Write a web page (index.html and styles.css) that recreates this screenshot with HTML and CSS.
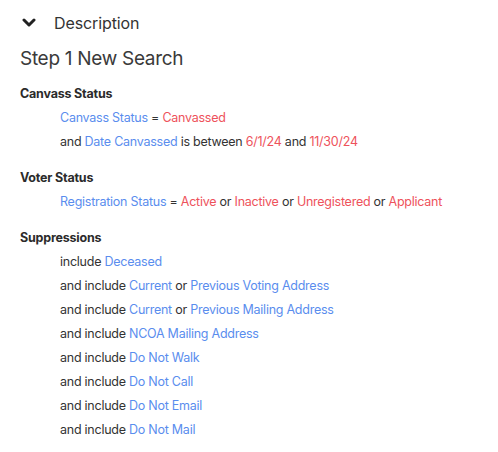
FILE: index.html
```html
<!DOCTYPE html>
<html>
<head>
<meta charset="utf-8">
<link rel="stylesheet" href="styles.css">
</head>
<body>
<div class="panel">
  <div class="toggle">
    <svg class="chev" width="14" height="10" viewBox="0 0 14 10"><path d="M2 2 L7 7 L12 2" fill="none" stroke="#222" stroke-width="3" stroke-linecap="round" stroke-linejoin="round"/></svg>
    <span>Description</span>
  </div>
  <h1 class="title">Step 1 New Search</h1>

  <section class="group">
    <h2 class="ghead">Canvass Status</h2>
    <div class="row"><span class="f">Canvass Status</span> = <span class="v">Canvassed</span></div>
    <div class="row">and <span class="f">Date Canvassed</span> is between <span class="v">6/1/24</span> and <span class="v">11/30/24</span></div>
  </section>

  <section class="group">
    <h2 class="ghead">Voter Status</h2>
    <div class="row"><span class="f">Registration Status</span> = <span class="v">Active</span> or <span class="v">Inactive</span> or <span class="v">Unregistered</span> or <span class="v">Applicant</span></div>
  </section>

  <section class="group">
    <h2 class="ghead">Suppressions</h2>
    <div class="row">include <span class="f">Deceased</span></div>
    <div class="row">and include <span class="f">Current</span> or <span class="f">Previous Voting Address</span></div>
    <div class="row">and include <span class="f">Current</span> or <span class="f">Previous Mailing Address</span></div>
    <div class="row">and include <span class="f">NCOA Mailing Address</span></div>
    <div class="row">and include <span class="f">Do Not Walk</span></div>
    <div class="row">and include <span class="f">Do Not Call</span></div>
    <div class="row">and include <span class="f">Do Not Email</span></div>
    <div class="row">and include <span class="f">Do Not Mail</span></div>
  </section>
</div>
</body>
</html>
```

FILE: styles.css
```css
html, body { margin: 0; padding: 0; background: #fff; }
body { font-family: Inter, "Noto Sans", sans-serif; color: #333; }
.panel { padding: 11px 20px 0 20px; }
.toggle { display: flex; align-items: center; gap: 18px; height: 24px; color: #333; font-size: 16px; letter-spacing: -0.1px; }
.chev { margin-left: 2px; }
.title { margin: 11px 0 0 0; font-size: 19px; font-weight: 400; line-height: 26px; color: #3a3a3a; letter-spacing: -0.3px; }
.group { margin-top: 11px; }
.group + .group { margin-top: 13px; }
.ghead { margin: 0 0 1px 0; font-size: 12.5px; font-weight: 700; line-height: 22px; color: #2b2b2b; letter-spacing: -0.2px; }
.row { padding-left: 40px; font-size: 12.5px; line-height: 24px; color: #333; letter-spacing: -0.25px; }
.f { color: #5a8dee; }
.v { color: #ee525b; }
```
